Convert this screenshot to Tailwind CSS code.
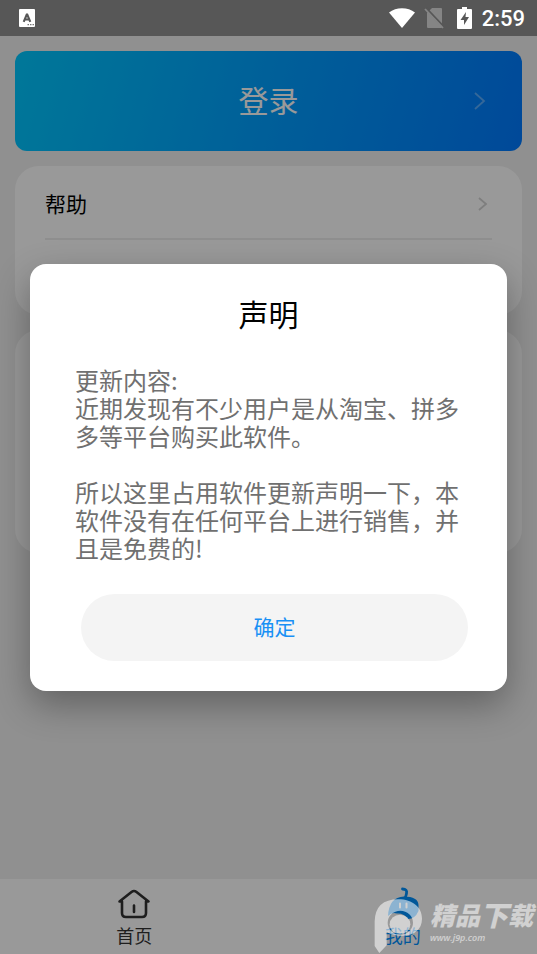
<!DOCTYPE html>
<html lang="zh-CN">
<head>
<meta charset="utf-8">
<meta name="viewport" content="width=device-width, initial-scale=1">
<title>我的</title>
<script src="https://cdn.jsdelivr.net/npm/@tailwindcss/browser@4"></script>
</head>
<body class="font-['Noto_Sans_CJK_SC',sans-serif] bg-[#f1f1f1] text-black">
<div class="relative flex flex-col min-h-screen overflow-hidden">
  <header class="relative z-20 flex items-center h-9 bg-[#575757] pl-[19px] pr-3 text-white">
    <svg class="w-4 h-[18px]" viewBox="0 0 16 18" aria-hidden="true"><rect width="16" height="18" rx="1" fill="#fff"/><path d="M4.700 12.800 8 5 11.300 12.800M5.800 10.500h4.400" fill="none" stroke="#575757" stroke-width="2.100" stroke-linejoin="bevel"/><path d="M8.500 15.700h1.500m1 0h1.500m1 0h1.500" stroke="#777" stroke-width="1.300"/></svg>
    <div class="ml-auto flex items-center">
      <svg class="w-[26px] h-5" viewBox="0 0 26 20" aria-hidden="true"><path d="M0 4.500C7-1.300 19-1.300 26 4.500L13 20Z" fill="#fff"/></svg>
      <svg class="ml-[9px] w-5 h-[22px]" viewBox="0 0 20 22" aria-hidden="true"><path d="M8 1h9q1 0 1 1v18q0 1-1 1H4q-1 0-1-1V6Z" fill="#858585"/><path d="M2 1 20 20" stroke="#575757" stroke-width="2"/><path d="M1 2 19 21" stroke="#858585" stroke-width="1.800"/></svg>
      <svg class="ml-[13px] w-[15px] h-[22px]" viewBox="0 0 15 22" aria-hidden="true"><path d="M5 0h5v2h4q1 0 1 1v18q0 1-1 1H1q-1 0-1-1V3q0-1 1-1h4Z" fill="#fff"/><path d="M9 5 3.500 13H7v5l5-8H8.500Z" fill="#575757"/></svg>
      <span class="ml-[10px] pt-px font-[Roboto,sans-serif] font-medium text-[22px] leading-6">2:59</span>
    </div>
  </header>

  <main class="flex flex-1 flex-col gap-[15px] p-[15px]">
    <button class="relative flex h-[100px] w-full items-center justify-center rounded-xl bg-[linear-gradient(105deg,#00c8ff,#009fff_50%,#007aff)] pb-1 text-[30px] text-white">登录
      <svg class="absolute right-9 top-10 w-3 h-5" viewBox="0 0 12 20" fill="none" stroke="#fff" stroke-opacity=".35" stroke-width="1.800" aria-hidden="true"><path d="M1 2l9 8-9 8"/></svg>
    </button>
    <section class="h-[149px] rounded-3xl bg-white px-[30px]">
      <a href="#" class="flex h-[74px] items-center justify-between border-b-2 border-[#ededed] pt-1 text-[21px]">帮助
        <svg class="mr-1 w-[10px] h-4" viewBox="0 0 10 16" fill="none" stroke="#d2d2d2" stroke-width="1.800" aria-hidden="true"><path d="M1 2l7 6-7 6"/></svg>
      </a>
    </section>
    <section class="h-[223px] rounded-3xl bg-white"></section>
  </main>

  <nav class="flex h-[75px] bg-white text-[18px] leading-6 text-[#333]">
    <a href="#" class="flex flex-1 flex-col items-center pt-2">
      <svg class="h-9 w-9" viewBox="0 0 36 36" fill="none" stroke="#333" stroke-width="2.600" stroke-linecap="round" stroke-linejoin="round" aria-hidden="true"><path d="M6 14.500H3.500L15.500 5q2.500-2 5 0l12 9.500H30V26q0 4-4 4H10q-4 0-4-4ZM18 18.500V25"/></svg>
      <span>首页</span>
    </a>
    <a href="#" class="flex flex-1 flex-col items-center pt-2 text-[#0091ff]">
      <svg class="h-9 w-9" viewBox="0 0 36 36" aria-hidden="true"><path d="M17.500 2q5 0 4 4.500T20 11" fill="none" stroke="#0091ff" stroke-width="2.800" stroke-linecap="round"/><path d="M3 29Q4 10 19 9.500Q33 9.500 33.500 18V24Q30 32 23 32Q19 26 12 26.500 7 24.500 3 29Z" fill="#0091ff"/><path d="M15 16.500v4m6.500-4v4" stroke="#fff" stroke-width="2" stroke-linecap="round"/></svg>
      <span>我的</span>
    </a>
  </nav>

  <div class="absolute inset-0 z-10 flex items-center justify-center bg-black/40 px-[30px]">
    <div role="dialog" aria-modal="true" aria-labelledby="notice-title" class="w-full rounded-2xl bg-white px-[45px] pt-7 pb-[30px] shadow-[0_14px_36px_rgba(0,0,0,0.32)]">
      <h1 id="notice-title" class="text-center text-[30px] leading-[42px]">声明</h1>
      <p class="mt-8 text-[24px] leading-7 text-[#707070]">更新内容:<br>近期发现有不少用户是从淘宝、拼多多等平台购买此软件。<br><br>所以这里占用软件更新声明一下，本软件没有在任何平台上进行销售，并且是免费的!</p>
      <button class="ml-[6px] mt-8 h-[67px] w-full rounded-full bg-[#f4f4f4] text-[21px] text-[#1890f5]">确定</button>
    </div>
  </div>

  <div class="absolute bottom-0 right-1 z-30 flex items-end text-white/55" aria-hidden="true">
    <svg class="h-14 w-12" viewBox="34 78 144 168"><path fill="currentColor" fill-rule="evenodd" d="M36 148Q38 82 107 82C150 82 178 106 178 140 178 172 154 191 120 191Q88 191 72 179V220L50 243 36 222ZM75 152A38 36 0 1 0 151 152A38 36 0 1 0 75 152Z"/><ellipse cx="112" cy="157" rx="31" ry="29" fill="currentColor"/></svg>
    <div class="mb-2 ml-2">
      <div class="flex items-center text-[25px] font-black italic leading-8 whitespace-nowrap">精品<span class="text-[28px]">下</span>载</div>
      <div class="font-['Open_Sans',sans-serif] text-[9px] italic font-semibold leading-4">www.j9p.com</div>
    </div>
  </div>
</div>
</body>
</html>
